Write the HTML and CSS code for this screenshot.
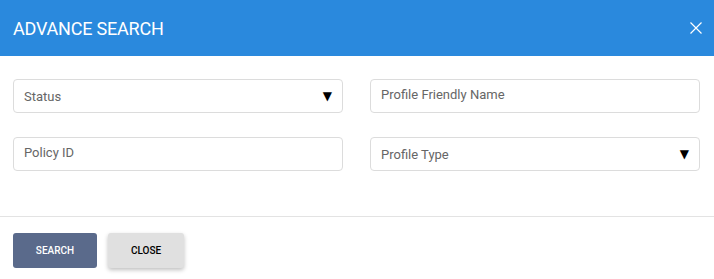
FILE: index.html
```html
<!DOCTYPE html>
<html>

<head>
  <meta charset="utf-8">
  <title>Advance Search</title>
  <link rel="stylesheet" href="styles.css">
</head>

<body>
  <div class="dialog">
    <div class="dialog-head">
      <h2 class="dialog-title">ADVANCE SEARCH</h2>
      <button class="dialog-x" title="Close">
        <svg width="12" height="12" viewBox="0 0 12 12">
          <path d="M0.5 0.5 L11.5 11.5 M11.5 0.5 L0.5 11.5" stroke="#fff" stroke-width="1.2" fill="none"/>
        </svg>
      </button>
    </div>

    <div class="dialog-body">
      <div class="field select">
        <span class="label">Status</span>
        <span class="caret">&#9660;</span>
      </div>
      <div class="field input">
        <span class="label">Profile Friendly Name</span>
      </div>
      <div class="field input">
        <span class="label">Policy ID</span>
      </div>
      <div class="field select">
        <span class="label">Profile Type</span>
        <span class="caret">&#9660;</span>
      </div>
    </div>

    <div class="dialog-foot">
      <button class="btn btn-search">SEARCH</button>
      <button class="btn btn-close">CLOSE</button>
    </div>
  </div>
</body>

</html>
```

FILE: styles.css
```css
* {
  box-sizing: border-box;
}

body {
  margin: 0;
  background: #fff;
  font-family: Roboto, "Liberation Sans", sans-serif;
}

.dialog {
  width: 714px;
  height: 279px;
}

.dialog-head {
  height: 56px;
  background: #2a89dd;
  display: flex;
  align-items: center;
  justify-content: space-between;
  padding: 0 12px 0 13px;
}

.dialog-title {
  margin: 0;
  color: #fff;
  font-size: 18px;
  font-weight: 400;
  letter-spacing: -0.2px;
}

.dialog-x {
  background: none;
  border: 0;
  padding: 0;
  width: 12px;
  height: 12px;
  display: flex;
}

.dialog-body {
  display: grid;
  grid-template-columns: 330px 330px;
  column-gap: 27px;
  row-gap: 24px;
  padding: 23px 14px 45px 13px;
  border-bottom: 1px solid #e3e3e3;
}

.field {
  height: 34px;
  border: 1px solid #dcdcdc;
  border-radius: 4px;
  display: flex;
  justify-content: space-between;
  padding: 0 10px;
  color: #666;
  font-size: 13px;
}

.field.select {
  align-items: center;
}

.field.input {
  padding-top: 7px;
}

.caret {
  color: #000;
  font-size: 12px;
  font-family: "DejaVu Sans", sans-serif;
}

.dialog-foot {
  display: flex;
  gap: 11px;
  padding: 16px 13px;
}

.btn {
  height: 35px;
  border: 0;
  border-radius: 3px;
  font-family: Roboto, "Liberation Sans", sans-serif;
  font-size: 10px;
  font-weight: 500;
}

.btn-search {
  width: 84px;
  background: #5a6a8b;
  color: #fff;
}

.btn-close {
  width: 76px;
  background: #e0e0e0;
  color: #000;
  box-shadow: 0 2px 4px rgba(0, 0, 0, 0.25);
}
```
